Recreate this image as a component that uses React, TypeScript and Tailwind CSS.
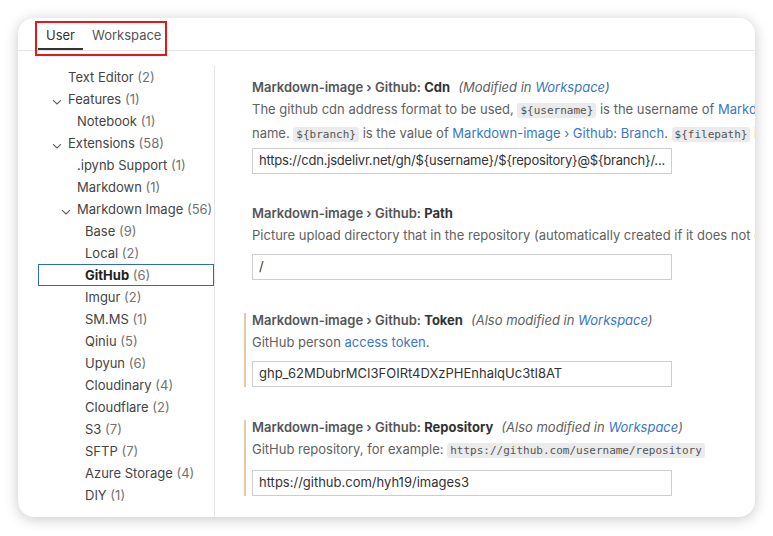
import React from 'react'

const tree = [
  { label: 'Text Editor', count: 2, indent: 68 },
  { label: 'Features', count: 1, indent: 68, open: true },
  { label: 'Notebook', count: 1, indent: 77 },
  { label: 'Extensions', count: 58, indent: 68, open: true },
  { label: '.ipynb Support', count: 1, indent: 77 },
  { label: 'Markdown', count: 1, indent: 77 },
  { label: 'Markdown Image', count: 56, indent: 77, open: true },
  { label: 'Base', count: 9, indent: 85 },
  { label: 'Local', count: 2, indent: 85 },
  { label: 'GitHub', count: 6, indent: 85, selected: true },
  { label: 'Imgur', count: 2, indent: 85 },
  { label: 'SM.MS', count: 1, indent: 85 },
  { label: 'Qiniu', count: 5, indent: 85 },
  { label: 'Upyun', count: 6, indent: 85 },
  { label: 'Cloudinary', count: 4, indent: 85 },
  { label: 'Cloudflare', count: 2, indent: 85 },
  { label: 'S3', count: 7, indent: 85 },
  { label: 'SFTP', count: 7, indent: 85 },
  { label: 'Azure Storage', count: 4, indent: 85 },
  { label: 'DIY', count: 1, indent: 85 },
]

const Chevron = () => (
  <svg width="10" height="10" viewBox="0 0 10 10" className="absolute -left-[16px] top-[6px]">
    <path d="M1 3.2 L5 7 L9 3.2" fill="none" stroke="#5f5f5f" strokeWidth="1.1" />
  </svg>
)

const Code = ({ children }: { children: React.ReactNode }) => (
  <code className="rounded-[3px] bg-[#ebebeb] px-[3px] py-[1px] text-[11px] text-[#555] font-['DejaVu_Sans_Mono',monospace]">
    {children}
  </code>
)

const Link = ({ children }: { children: React.ReactNode }) => (
  <span className="text-[#3a77c5]">{children}</span>
)

const Title = ({ name, note }: { name: string; note?: string }) => (
  <div className="h-[14px] leading-[14px] whitespace-nowrap">
    <span className="font-semibold text-[#555]">Markdown-image › Github: </span>
    <span className="font-bold text-[#333]">{name}</span>
    {note && (
      <span className="ml-[8px] italic text-[#616161]">
        ({note} <Link>Workspace</Link>)
      </span>
    )}
  </div>
)

const Input = ({ value, mt, tight }: { value: string; mt: string; tight?: boolean }) => (
  <div
    className={`${mt} flex h-[26px] w-[420px] items-center overflow-hidden border border-[#cecece] px-[6px] text-[#333] whitespace-nowrap ${tight ? 'tracking-[-0.2px]' : ''}`}
  >
    {value}
  </div>
)

export default function App() {
  return (
    <div className="h-[536px] w-[773px] bg-white p-[18px] font-['Inter',sans-serif] text-[13px]">
      <div className="relative flex h-[499px] w-[737px] flex-col overflow-hidden rounded-[16px] bg-white shadow-[0_2px_14px_rgba(0,0,0,0.22)]">
        <div className="flex h-[33px] shrink-0 items-end gap-[9px] border-b border-[#e3e3e3] pl-[20px]">
          <div className="border-b-2 border-[#333] px-[8px] pb-[5px] leading-[16px] text-[#333]">User</div>
          <div className="pb-[7px] leading-[16px] text-[#555]">Workspace</div>
        </div>
        <div className="absolute left-[17px] top-[3px] h-[35px] w-[132px] border-2 border-[#e8161b]" />

        <div className="flex min-h-0 flex-1">
          <div className="mt-[15px] w-[197px] shrink-0 border-r border-[#e6e6e6]">
            {tree.map((t) => (
              <div
                key={t.label}
                className={`relative ml-[20px] h-[22px] leading-[20px] ${t.selected ? 'border border-[#2d6ac2]' : 'border border-transparent'}`}
              >
                <span className="relative whitespace-nowrap" style={{ marginLeft: t.indent - 39 }}>
                  {t.open && <Chevron />}
                  <span className={t.selected ? 'font-bold text-[#222]' : 'text-[#444]'}>{t.label}</span>
                  <span className="text-[#727272]"> ({t.count})</span>
                </span>
              </div>
            ))}
          </div>

          <div className="min-w-0 flex-1 overflow-hidden pl-[29px] pr-0 pt-[29px]">
            <div className="w-[600px] pl-[8px]">
              <Title name="Cdn" note="Modified in" />
              <div className="mt-[4px] leading-[22px] text-[#616161]">
                <div className="whitespace-nowrap">
                  The github cdn address format to be used, <Code>{'${username}'}</Code> is the username of <Link>Markdown-image › Github: User</Link>
                </div>
                <div className="whitespace-nowrap">
                  name. <Code>{'${branch}'}</Code> is the value of <Link>Markdown-image › Github: Branch</Link>. <Code>{'${filepath}'}</Code> is the file path
                </div>
              </div>
              <Input mt="mt-[2px]" tight value="https://cdn.jsdelivr.net/gh/${username}/${repository}@${branch}/..." />
            </div>

            <div className="mt-[32px] w-[600px] pl-[8px]">
              <Title name="Path" />
              <div className="mt-[4px] whitespace-nowrap leading-[22px] text-[#616161]">
                Picture upload directory that in the repository (automatically created if it does not exist)
              </div>
              <Input mt="mt-[8px]" value="/" />
            </div>

            <div className="mt-[33px] w-[600px] border-l-2 border-[#e8c9a2] pl-[6px]">
              <Title name="Token" note="Also modified in" />
              <div className="mt-[4px] leading-[22px] text-[#616161]">
                GitHub person <Link>access token</Link>.
              </div>
              <Input mt="mt-[8px]" value="ghp_62MDubrMCI3FOIRt4DXzPHEnhalqUc3tI8AT" />
            </div>

            <div className="mt-[33px] w-[600px] border-l-2 border-[#e8c9a2] pl-[6px]">
              <Title name="Repository" note="Also modified in" />
              <div className="mt-[4px] leading-[22px] text-[#616161] whitespace-nowrap">
                GitHub repository, for example: <Code>https://github.com/username/repository</Code>
              </div>
              <Input mt="mt-[8px]" value="https://github.com/hyh19/images3" />
            </div>
          </div>
        </div>
      </div>
    </div>
  )
}
